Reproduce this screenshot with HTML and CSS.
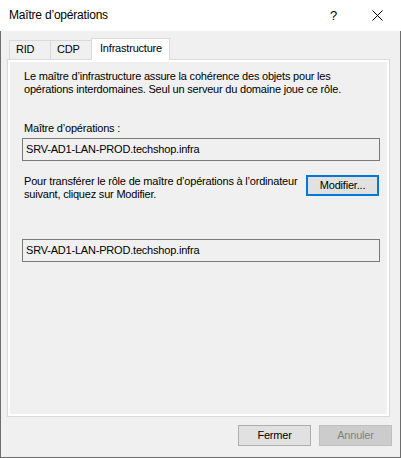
FILE: index.html
```html
<!DOCTYPE html>
<html lang="fr">
<head>
<meta charset="utf-8">
<title>Maître d’opérations</title>
<link rel="stylesheet" href="styles.css">
</head>
<body>
<div class="window">
  <div class="titlebar">
    <span class="title">Maître d’opérations</span>
    <span class="help">?</span>
    <svg class="close" width="11" height="11" viewBox="0 0 11 11"><path d="M0.5 0.5 L10.5 10.5 M10.5 0.5 L0.5 10.5" stroke="#000" stroke-width="1" fill="none"/></svg>
  </div>
  <div class="body">
    <div class="tabs">
      <div class="tab tab-rid">RID</div>
      <div class="tab tab-cdp">CDP</div>
      <div class="tab tab-active">Infrastructure</div>
    </div>
    <div class="panel">
      <div class="page">
        <p class="text">Le maître d’infrastructure assure la cohérence des objets pour les<br>opérations interdomaines. Seul un serveur du domaine joue ce rôle.</p>
        <p class="text label">Maître d’opérations :</p>
        <div class="field">SRV-AD1-LAN-PROD.techshop.infra</div>
        <div class="transfer">
          <p class="text">Pour transférer le rôle de maître d’opérations à l’ordinateur<br>suivant, cliquez sur Modifier.</p>
          <div class="btn btn-focus">Modifier...</div>
        </div>
        <div class="field field2">SRV-AD1-LAN-PROD.techshop.infra</div>
      </div>
    </div>
    <div class="footer">
      <div class="btn">Fermer</div>
      <div class="btn btn-disabled">Annuler</div>
    </div>
  </div>
</div>
</body>
</html>
```

FILE: styles.css
```css
html, body {
  margin: 0;
  padding: 0;
  background: #fff;
}
body {
  font-family: "Liberation Sans", Arial, sans-serif;
  font-size: 11px;
  color: #000;
}
.window {
  width: 401px;
  height: 458px;
  display: flex;
  flex-direction: column;
}
.titlebar {
  height: 31px;
  background: #fff;
  display: flex;
  align-items: center;
  padding-left: 9px;
  box-sizing: border-box;
}
.title {
  font-size: 12px;
  letter-spacing: -0.2px;
  flex: 1;
  padding-bottom: 1px;
}
.help {
  font-size: 13px;
  width: 42px;
  padding-bottom: 1px;
}
.close {
  margin-right: 18px;
  margin-bottom: 1px;
}
.body {
  flex: 1;
  background: #f0f0f0;
  border: 1px solid #6d6d6d;
  border-top: none;
  padding: 7px 0 0 6px;
  display: flex;
  flex-direction: column;
}
.tabs {
  display: flex;
  align-items: flex-end;
  height: 21px;
  padding-left: 2px;
  position: relative;
  z-index: 1;
}
.tab {
  box-sizing: border-box;
  height: 19px;
  border: 1px solid #d9d9d9;
  border-bottom: none;
  line-height: 17px;
  letter-spacing: -0.2px;
  background: #f0f0f0;
}
.tab-rid {
  width: 42px;
  padding-left: 6px;
}
.tab-cdp {
  width: 40px;
  border-left: none;
  border-right: none;
  padding-left: 6px;
}
.tab-active {
  width: 79px;
  height: 22px;
  margin-bottom: -1px;
  background: #fff;
  padding-left: 8px;
  line-height: 19px;
}
.panel {
  box-sizing: border-box;
  width: 383px;
  height: 358px;
  border: 1px solid #d9d9d9;
  background: #fff;
  padding: 2px;
}
.page {
  height: 100%;
  background: #f0f0f0;
  padding: 8px 7px 0 12px;
  box-sizing: border-box;
}
.text {
  margin: 0;
  line-height: 13px;
  padding-left: 2px;
  letter-spacing: -0.2px;
}
.label {
  margin-top: 26px;
}
.field {
  box-sizing: border-box;
  height: 23px;
  margin-top: 3px;
  border: 1px solid #7a7a7a;
  background: #f0f0f0;
  padding-left: 3px;
  line-height: 21px;
  letter-spacing: -0.2px;
}
.field2 {
  margin-top: 38px;
}
.transfer {
  display: flex;
  justify-content: space-between;
  align-items: flex-start;
  margin-top: 14px;
}
.btn {
  box-sizing: border-box;
  width: 73px;
  height: 21px;
  border: 1px solid #adadad;
  background: #e1e1e1;
  text-align: center;
  line-height: 19px;
  letter-spacing: -0.2px;
}
.btn-focus {
  border: 2px solid #0078d7;
  line-height: 17px;
  margin-right: 1px;
}
.btn-disabled {
  background: #cccccc;
  border-color: #bfbfbf;
  color: #838383;
}
.footer {
  display: flex;
  justify-content: flex-end;
  gap: 8px;
  margin-top: 8px;
  padding-right: 8px;
}
```
